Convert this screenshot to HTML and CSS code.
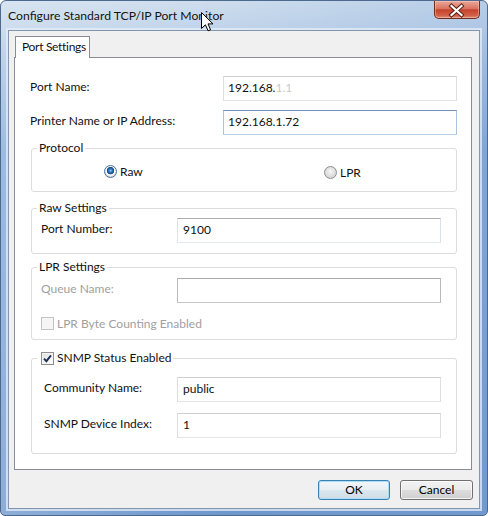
FILE: index.html
```html
<!DOCTYPE html>
<html lang="en">
<head>
<meta charset="utf-8">
<title>Configure Standard TCP/IP Port Monitor</title>
<link rel="stylesheet" href="styles.css">
</head>
<body>
<div class="window">
  <div class="titlebar">
    <span class="title">Configure Standard TCP/IP Port Monitor</span>
    <button class="close" type="button" aria-label="Close">
      <svg width="46" height="18" viewBox="0 0 46 18">
        <path d="M18.5 5 L28.5 14 M28.5 5 L18.5 14" stroke="#5b2016" stroke-width="4.2" stroke-linecap="square"/>
        <path d="M18.5 5 L28.5 14 M28.5 5 L18.5 14" stroke="#ffffff" stroke-width="2.2" stroke-linecap="square"/>
      </svg>
    </button>
  </div>

  <!-- mouse pointer resting on the title bar -->
  <svg class="cursor" width="13" height="20" viewBox="0 0 13 20">
    <path d="M0.5 0.5 V16.5 L4.4 12.8 L7.1 18.8 L9.6 17.8 L7 11.9 H12 Z" fill="#fff" stroke="#000" stroke-width="1" stroke-linejoin="miter"/>
  </svg>

  <div class="client">
    <div class="tabs">
      <div class="tab">Port Settings</div>
    </div>

    <div class="panel">
      <div class="row row-first">
        <span class="label">Port Name:</span>
        <div class="field wide soft">192.168.<span class="masked">1.1</span></div>
      </div>
      <div class="row row-second">
        <span class="label">Printer Name or IP Address:</span>
        <div class="field wide focus">192.168.1.72</div>
      </div>

      <fieldset class="group group-protocol">
        <legend>Protocol</legend>
        <div class="radios">
          <label class="radio"><span class="dot on"></span>Raw</label>
          <label class="radio radio-lpr"><span class="dot"></span>LPR</label>
        </div>
      </fieldset>

      <fieldset class="group group-raw">
        <legend>Raw Settings</legend>
        <div class="grow grow-port">
          <span class="glabel">Port Number:</span>
          <div class="field narrow">9100</div>
        </div>
      </fieldset>

      <fieldset class="group group-lpr">
        <legend>LPR Settings</legend>
        <div class="grow grow-queue">
          <span class="glabel disabled">Queue Name:</span>
          <div class="field narrow off"></div>
        </div>
        <div class="check-row">
          <span class="box box-off"></span>
          <span class="disabled">LPR Byte Counting Enabled</span>
        </div>
      </fieldset>

      <fieldset class="group group-snmp">
        <legend>
          <span class="box box-on">
            <svg width="13" height="13" viewBox="0 0 13 13">
              <path d="M3 6.6 L5.4 9.2 L10 3.4" fill="none" stroke="#1f2f52" stroke-width="1.9"/>
            </svg>
          </span>
          <span>SNMP Status Enabled</span>
        </legend>
        <div class="grow grow-snmp grow-community">
          <span class="glabel">Community Name:</span>
          <div class="field narrow soft">public</div>
        </div>
        <div class="grow grow-snmp grow-index">
          <span class="glabel">SNMP Device Index:</span>
          <div class="field narrow soft">1</div>
        </div>
      </fieldset>
    </div>

    <div class="buttons">
      <button class="btn btn-ok" type="button">OK</button>
      <button class="btn btn-cancel" type="button">Cancel</button>
    </div>
  </div>
</div>
</body>
</html>
```

FILE: styles.css
```css
* {
  box-sizing: border-box;
}

html,
body {
  margin: 0;
  padding: 0;
}

body {
  width: 488px;
  height: 516px;
  overflow: hidden;
  background: #ffffff;
  font-family: Lato, "Segoe UI", "Noto Sans", sans-serif;
  font-size: 12px;
  color: #111;
}

/* ---------- window frame ---------- */

.window {
  position: relative;
  width: 488px;
  height: 516px;
  display: flex;
  flex-direction: column;
  border: 1px solid #4d6a8e;
  border-radius: 6px 6px 5px 5px;
  overflow: hidden;
  background:
    linear-gradient(90deg, rgba(255, 255, 255, 0.22) 0, rgba(255, 255, 255, 0) 45%, rgba(120, 160, 215, 0.25) 100%),
    linear-gradient(180deg, #cddded 0, #c1d4ea 26px, #abc4e3 60px, #82a8d8 150px, #6e97cd 100%);
}

.titlebar {
  height: 29px;
  flex: 0 0 29px;
  display: flex;
  align-items: flex-start;
  padding-left: 7px;
}

.title {
  line-height: 29px;
  font-size: 12.2px;
  color: #141414;
  white-space: nowrap;
}

.close {
  margin-left: auto;
  margin-right: 7px;
  width: 46px;
  height: 18px;
  padding: 0;
  border: 1px solid #6e2c22;
  border-top: none;
  border-radius: 0 0 5px 5px;
  background: linear-gradient(180deg, #e8a89a 0, #da7361 45%, #c6422b 52%, #d2604a 85%, #e0907a 100%);
  box-shadow: inset 0 0 0 1px rgba(255, 210, 200, 0.45);
  display: flex;
  align-items: center;
  justify-content: center;
}

.close svg {
  display: block;
  margin-left: -2px;
}

.cursor {
  position: absolute;
  left: 200px;
  top: 11px;
  z-index: 5;
}

/* ---------- client area ---------- */

.client {
  flex: 1;
  margin: 0 7px 6px;
  border: 1px solid #8296ad;
  background: #f0f0f0;
  padding: 5px 7px 8px 5px;
  display: flex;
  flex-direction: column;
  box-shadow: 0 0 0 2px rgba(230, 238, 248, 0.75);
}

.tabs {
  display: flex;
  padding-left: 1px;
}

.tab {
  position: relative;
  z-index: 1;
  width: 75px;
  height: 22px;
  margin-bottom: -1px;
  padding-left: 6px;
  border: 1px solid #898c95;
  border-bottom: none;
  background: #ffffff;
  line-height: 20px;
  letter-spacing: -0.3px;
  white-space: nowrap;
}

.panel {
  flex: 1;
  border: 1px solid #898c95;
  background: #ffffff;
  display: flex;
  flex-direction: column;
}

/* ---------- top rows ---------- */

.row {
  display: flex;
  align-items: center;
  padding: 0 14px 0 15px;
}

.row-first {
  margin-top: 18px;
}

.row-second {
  margin-top: 9px;
}

.label {
  flex: 0 0 193px;
  padding-bottom: 4px;
  white-space: nowrap;
}

/* ---------- text fields ---------- */

.field {
  height: 25px;
  display: flex;
  align-items: center;
  padding: 0 0 3px 5px;
  background: #ffffff;
  border: 1px solid;
  border-color: #abadb3 #dbdfe6 #e3e9ef #e2e3ea;
  white-space: nowrap;
}

.wide {
  flex: 1;
  padding-left: 4px;
}

.narrow {
  width: 264px;
}

.soft {
  border-color: #cfcfcf #dedede #e4e4e4 #dedede;
}

.focus {
  border-color: #6f8fb5 #a9c3de #b7d0e8 #a9c3de;
}

.off {
  border-color: #ababab #b9b9b9 #c9c9c9 #b9b9b9;
}

.masked {
  color: #c9c9c9;
}

/* ---------- group boxes ---------- */

.group {
  margin: 0 14px 0 16px;
  padding: 0 5px;
  min-width: 0;
  border: 1px solid #dcdcdc;
  border-radius: 3px;
}

.group legend {
  padding: 0 2px;
  height: 16px;
  line-height: 16px;
  white-space: nowrap;
}

.group-protocol {
  margin-top: 5px;
  padding-bottom: 11px;
}

.group-raw {
  margin-top: 8px;
  padding-bottom: 10px;
}

.group-lpr {
  margin-top: 5px;
  padding-bottom: 8px;
}

.group-snmp {
  margin-top: 10px;
  padding-bottom: 15px;
}

.group-snmp legend {
  display: flex;
  align-items: center;
}

.radios {
  display: grid;
  grid-template-columns: 220px 1fr;
  align-items: start;
  margin-top: 7px;
  padding-left: 67px;
}

.radio {
  display: flex;
  align-items: center;
  height: 16px;
  gap: 3px;
}

.radio-lpr {
  margin-top: 1px;
}

.dot {
  width: 13px;
  height: 13px;
  border-radius: 50%;
  border: 1px solid #8c8e90;
  background: radial-gradient(circle at 50% 40%, #f6f6f6 0, #e2e2e2 45%, #c9c9c9 100%);
}

.dot.on {
  border-color: #4f6f8f;
  background: radial-gradient(circle at 50% 42%, #9ccbf2 0, #3377bd 1.6px, #114f8e 3.4px, #ffffff 4.1px, #f4f6f8 4.8px, #d3dae1 6px);
}

.grow {
  display: flex;
  align-items: center;
  padding-left: 4px;
}

.grow-port {
  margin-top: 2px;
}

.grow-queue {
  margin-top: 3px;
}

.grow-snmp {
  padding-left: 7px;
}

.grow-community {
  margin-top: 11px;
}

.grow-index {
  margin-top: 11px;
}

.glabel {
  flex: 0 0 136px;
  padding-bottom: 4px;
  white-space: nowrap;
}

.grow-snmp .glabel {
  flex-basis: 133px;
}

.disabled {
  color: #a0a0a0;
}

/* ---------- check boxes ---------- */

.check-row {
  display: flex;
  align-items: center;
  gap: 3px;
  height: 16px;
  margin-top: 12px;
  padding-left: 4px;
}

.box {
  flex: 0 0 13px;
  width: 13px;
  height: 13px;
  border: 1px solid #8f8f8f;
  background: linear-gradient(135deg, #dedede 0, #f4f4f4 60%, #ffffff 100%);
  box-shadow: inset 0 0 0 1px #f4f4f4;
  position: relative;
}

.box-off {
  border-color: #c3c3c3;
  background: #f5f5f5;
  box-shadow: none;
}

.box-on {
  margin-left: 2px;
  margin-right: 3px;
}

.box-on svg {
  position: absolute;
  left: -1px;
  top: -1px;
}

/* ---------- dialog buttons ---------- */

.buttons {
  display: flex;
  justify-content: flex-end;
  gap: 10px;
  margin-top: 10px;
  margin-right: -1px;
}

.btn {
  height: 20px;
  padding: 0 0 2px;
  font: inherit;
  color: #000;
  border: 1px solid #707070;
  border-radius: 3px;
  background: linear-gradient(180deg, #f2f2f2 0, #ebebeb 48%, #dddddd 52%, #cfcfcf 100%);
  box-shadow: inset 0 0 0 1px rgba(255, 255, 255, 0.7);
}

.btn-ok {
  width: 72px;
  border-color: #3c7fb1;
  background: linear-gradient(180deg, #f1f6f9 0, #e8eff4 48%, #dbe6ee 52%, #cfdde8 100%);
  box-shadow: inset 0 0 0 1px #a8def7;
}

.btn-cancel {
  width: 73px;
}
```
